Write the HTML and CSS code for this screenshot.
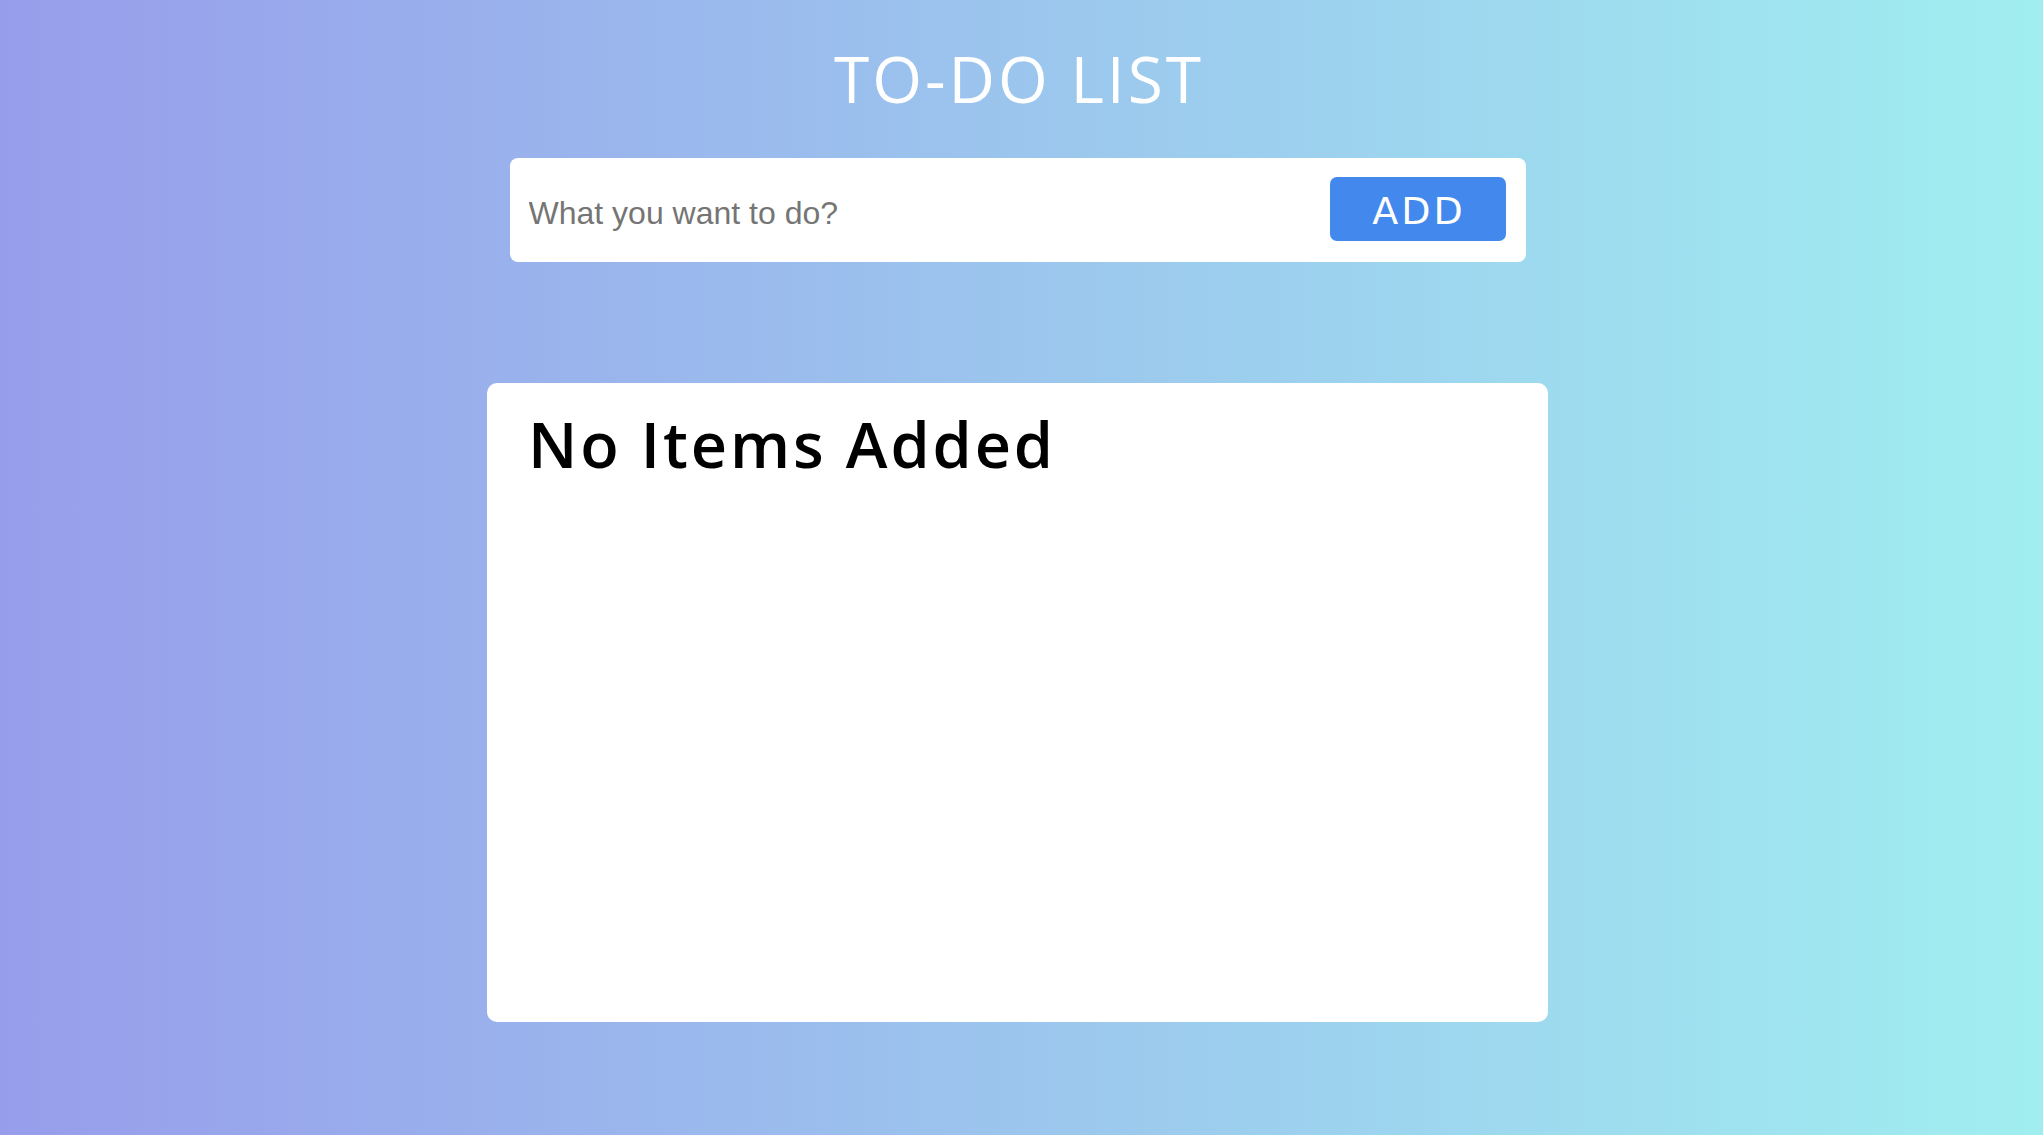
FILE: index.html
```html
<!DOCTYPE html>
<html lang="en">
<head>
<meta charset="utf-8">
<title>To-Do List</title>
<link rel="stylesheet" href="styles.css">
</head>
<body>
<main class="app">
  <h1 class="title">TO-DO LIST</h1>
  <form class="entry">
    <input class="entry-input" type="text" placeholder="What you want to do?">
    <button class="entry-btn" type="button">ADD</button>
  </form>
  <section class="list-card">
    <h2 class="empty">No Items Added</h2>
  </section>
</main>
</body>
</html>
```

FILE: styles.css
```css
html, body {
  margin: 0;
  height: 100%;
}
body {
  background: linear-gradient(to right, #979deb, #a0eef0);
  font-family: "Open Sans", "Liberation Sans", sans-serif;
}
.app {
  display: flex;
  flex-direction: column;
  align-items: center;
  padding-top: 34px;
  padding-right: 8px;
}
.title {
  margin: 0;
  color: #ffffff;
  font-weight: 400;
  font-size: 64px;
  line-height: 90px;
  letter-spacing: 3px;
  padding-left: 3px;
}
.entry {
  margin-top: 34px;
  width: 1016px;
  height: 104px;
  box-sizing: border-box;
  background: #ffffff;
  border-radius: 8px;
  display: flex;
  align-items: center;
  padding: 0 20px 0 19px;
  gap: 16px;
}
.entry-input {
  flex: 1;
  border: none;
  outline: none;
  background: transparent;
  font-family: "Liberation Sans", Arial, sans-serif;
  font-size: 32px;
  color: #333;
  padding: 0;
  margin-top: 6px;
}
.entry-input::placeholder {
  color: #757575;
}
.entry-btn {
  width: 176px;
  height: 64px;
  border: none;
  border-radius: 7px;
  background: #4388ec;
  color: #ffffff;
  font-family: "DejaVu Sans", sans-serif;
  font-size: 38px;
  letter-spacing: 3px;
  padding: 3px 0 0 3px;
  margin-top: -2px;
}
.list-card {
  margin-top: 121px;
  width: 1061px;
  height: 639px;
  box-sizing: border-box;
  background: #ffffff;
  border-radius: 10px;
  padding: 16px 36px 16px 41px;
}
.empty {
  margin: 0;
  font-weight: 600;
  font-size: 63px;
  line-height: 90px;
  letter-spacing: 2.9px;
  color: #000;
}
```
